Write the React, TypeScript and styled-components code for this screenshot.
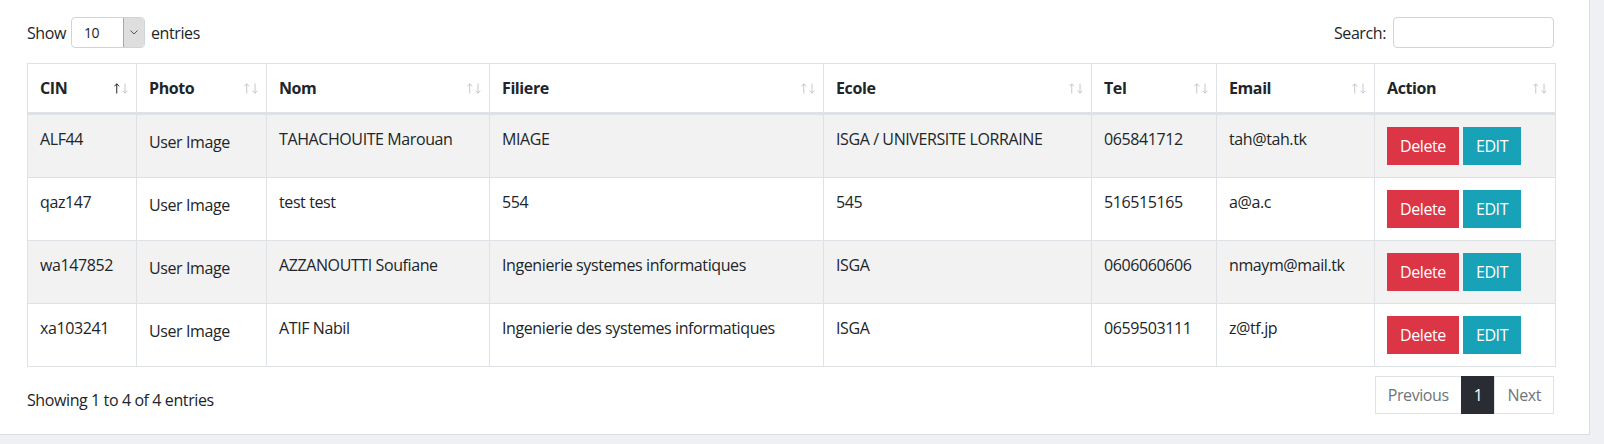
import React from 'react';
import styled, { createGlobalStyle } from 'styled-components';

const GlobalStyle = createGlobalStyle`
  html, body { margin: 0; padding: 0; }
  body {
    background: #eff0f4;
    font-family: "Open Sans", "Segoe UI", Roboto, sans-serif;
    font-size: 16px;
    line-height: 1.5;
    color: #212529;
    letter-spacing: -0.4px;
  }
  * { box-sizing: border-box; }
`;

const Card = styled.div`
  width: 1590px;
  height: 435px;
  background: #fff;
  border-right: 1px solid #dcdde3;
  border-bottom: 1px solid #dcdde3;
  padding: 17px 35px 0 27px;
  display: flex;
  flex-direction: column;
`;

const TopBar = styled.div`
  display: flex;
  justify-content: space-between;
  align-items: center;
  height: 31px;
`;

const LengthLabel = styled.label`
  display: flex;
  align-items: center;
  gap: 5px;
`;

const SelectBox = styled.div`
  width: 74px;
  height: 31px;
  border: 1px solid #ced4da;
  border-radius: 4px;
  display: flex;
  align-items: stretch;
  font-size: 14px;
  overflow: hidden;
  margin-right: 1px;
`;

const SelectValue = styled.span`
  flex: 1;
  padding-left: 12px;
  display: flex;
  align-items: center;
`;

const SelectArrow = styled.span`
  width: 21px;
  background: #dedede;
  border-left: 1px solid #a8a8a8;
  border-radius: 0 3px 3px 0;
  display: flex;
  align-items: center;
  justify-content: center;
`;

const SearchLabel = styled.label`
  display: flex;
  align-items: center;
  gap: 7px;
`;

const SearchInput = styled.input`
  width: 161px;
  height: 31px;
  border: 1px solid #ced4da;
  border-radius: 4px;
  padding: 0 8px;
  font: inherit;
  font-size: 14px;
  outline: none;
`;

const Table = styled.table`
  margin-top: 15px;
  width: 1528px;
  border-collapse: collapse;
  table-layout: fixed;
`;

const Th = styled.th`
  position: relative;
  text-align: left;
  font-weight: 700;
  padding: 12px 30px 12px 12px;
  border: 1px solid #dee2e6;
  border-bottom: 3px solid #dee2e6;
  vertical-align: bottom;
  white-space: nowrap;
`;

const SortIcon = styled.svg`
  position: absolute;
  right: 8px;
  bottom: 18px;
  width: 14px;
  height: 11px;
`;

const Tr = styled.tr<{ $striped: boolean }>`
  background: ${(p) => (p.$striped ? '#f2f2f2' : '#fff')};
`;

const Td = styled.td`
  padding: 12px;
  border: 1px solid #dee2e6;
  vertical-align: top;
  height: 63px;
`;

const PhotoText = styled.span`
  display: inline-block;
  padding-top: 3px;
`;

const Button = styled.button<{ $variant: 'danger' | 'info' }>`
  font: inherit;
  letter-spacing: inherit;
  color: #fff;
  background: ${(p) => (p.$variant === 'danger' ? '#dc3545' : '#17a2b8')};
  border: 1px solid ${(p) => (p.$variant === 'danger' ? '#dc3545' : '#17a2b8')};
  padding: 6px 12px;
  line-height: 24px;
  border-radius: 0;
  margin-right: 4px;
  cursor: pointer;
`;

const Footer = styled.div`
  display: flex;
  justify-content: space-between;
  align-items: flex-start;
  margin-top: 9px;
`;

const Info = styled.div`
  padding-top: 12px;
`;

const Pagination = styled.ul`
  display: flex;
  list-style: none;
  margin: 0;
  padding: 0;
`;

const PageLink = styled.li<{ $active?: boolean }>`
  padding: 8px 12px;
  line-height: 20px;
  border: 1px solid ${(p) => (p.$active ? '#292d33' : '#dee2e6')};
  background: ${(p) => (p.$active ? '#292d33' : '#fff')};
  color: ${(p) => (p.$active ? '#fff' : '#6c757d')};
  margin-left: -1px;
`;

const Sort = ({ active }: { active?: boolean }) => (
  <SortIcon viewBox="0 0 14 11">
    <g fill="none" strokeWidth="1">
      <path d="M2.75 0.8 V10.5 M0.4 3.3 L2.75 0.8 L5.1 3.3" stroke={active ? '#212529' : '#c4c6c8'} />
      <path d="M11 0.5 V10.2 M8.65 7.7 L11 10.2 L13.35 7.7" stroke="#c4c6c8" />
    </g>
  </SortIcon>
);

const columns: { name: string; width: number }[] = [
  { name: 'CIN', width: 109 },
  { name: 'Photo', width: 130 },
  { name: 'Nom', width: 223 },
  { name: 'Filiere', width: 334 },
  { name: 'Ecole', width: 268 },
  { name: 'Tel', width: 125 },
  { name: 'Email', width: 158 },
  { name: 'Action', width: 181 },
];

const rows = [
  ['ALF44', 'TAHACHOUITE Marouan', 'MIAGE', 'ISGA / UNIVERSITE LORRAINE', '065841712', 'tah@tah.tk'],
  ['qaz147', 'test test', '554', '545', '516515165', 'a@a.c'],
  ['wa147852', 'AZZANOUTTI Soufiane', 'Ingenierie systemes informatiques', 'ISGA', '0606060606', 'nmaym@mail.tk'],
  ['xa103241', 'ATIF Nabil', 'Ingenierie des systemes informatiques', 'ISGA', '0659503111', 'z@tf.jp'],
];

export default function App() {
  return (
    <>
      <GlobalStyle />
      <Card>
        <TopBar>
          <LengthLabel>
            Show
            <SelectBox>
              <SelectValue>10</SelectValue>
              <SelectArrow>
                <svg width="8" height="5" viewBox="0 0 8 5">
                  <path d="M0.5 0.5 L4 4 L7.5 0.5" fill="none" stroke="#555" strokeWidth="1" />
                </svg>
              </SelectArrow>
            </SelectBox>
            entries
          </LengthLabel>
          <SearchLabel>
            Search:
            <SearchInput type="search" />
          </SearchLabel>
        </TopBar>
        <Table>
          <colgroup>
            {columns.map((c) => (
              <col key={c.name} style={{ width: c.width }} />
            ))}
          </colgroup>
          <thead>
            <tr>
              {columns.map((c, i) => (
                <Th key={c.name}>
                  {c.name}
                  <Sort active={i === 0} />
                </Th>
              ))}
            </tr>
          </thead>
          <tbody>
            {rows.map((r, i) => (
              <Tr key={r[0]} $striped={i % 2 === 0}>
                <Td>{r[0]}</Td>
                <Td>
                  <PhotoText>User Image</PhotoText>
                </Td>
                <Td>{r[1]}</Td>
                <Td>{r[2]}</Td>
                <Td>{r[3]}</Td>
                <Td>{r[4]}</Td>
                <Td>{r[5]}</Td>
                <Td>
                  <Button $variant="danger">Delete</Button>
                  <Button $variant="info">EDIT</Button>
                </Td>
              </Tr>
            ))}
          </tbody>
        </Table>
        <Footer>
          <Info>Showing 1 to 4 of 4 entries</Info>
          <Pagination>
            <PageLink>Previous</PageLink>
            <PageLink $active>1</PageLink>
            <PageLink>Next</PageLink>
          </Pagination>
        </Footer>
      </Card>
    </>
  );
}
